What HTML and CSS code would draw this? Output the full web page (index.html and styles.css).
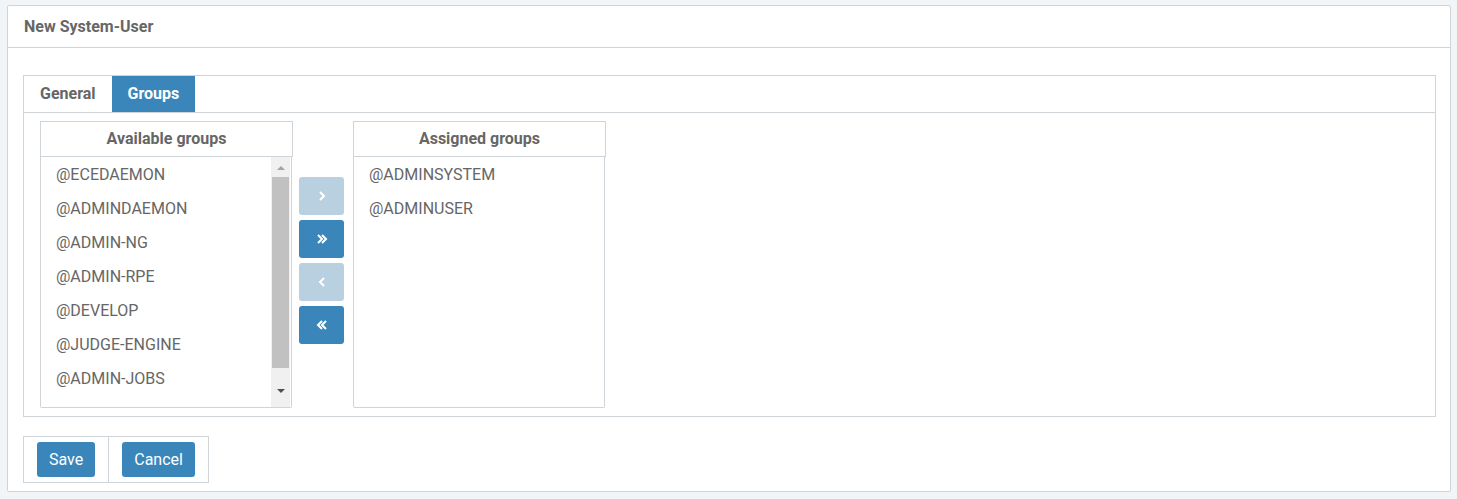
FILE: index.html
```html
<!DOCTYPE html>
<html>
<head>
<meta charset="utf-8">
<link rel="stylesheet" href="styles.css">
</head>
<body>
<div class="panel">
  <div class="panel-header">New System-User</div>
  <div class="panel-body">
    <div class="tabs">
      <div class="tab-bar">
        <div class="tab">General</div>
        <div class="tab active">Groups</div>
      </div>
      <div class="tab-content">
        <div class="listbox">
          <div class="listbox-head">Available groups</div>
          <div class="listbox-body">
            <ul class="items">
              <li>@ECEDAEMON</li>
              <li>@ADMINDAEMON</li>
              <li>@ADMIN-NG</li>
              <li>@ADMIN-RPE</li>
              <li>@DEVELOP</li>
              <li>@JUDGE-ENGINE</li>
              <li>@ADMIN-JOBS</li>
            </ul>
            <div class="scrollbar">
              <div class="arrow up"></div>
              <div class="thumb"></div>
              <div class="arrow down"></div>
            </div>
          </div>
        </div>
        <div class="movers">
          <div class="mv disabled"><svg width="10" height="12" viewBox="0 0 10 12"><path d="M3 2 L7 6 L3 10" fill="none" stroke="#fff" stroke-width="2"/></svg></div>
          <div class="mv"><svg width="12" height="12" viewBox="0 0 12 12"><path d="M2 2 L6 6 L2 10 M6 2 L10 6 L6 10" fill="none" stroke="#fff" stroke-width="2"/></svg></div>
          <div class="mv disabled"><svg width="10" height="12" viewBox="0 0 10 12"><path d="M7 2 L3 6 L7 10" fill="none" stroke="#fff" stroke-width="2"/></svg></div>
          <div class="mv"><svg width="12" height="12" viewBox="0 0 12 12"><path d="M6 2 L2 6 L6 10 M10 2 L6 6 L10 10" fill="none" stroke="#fff" stroke-width="2"/></svg></div>
        </div>
        <div class="listbox">
          <div class="listbox-head">Assigned groups</div>
          <div class="listbox-body">
            <ul class="items">
              <li>@ADMINSYSTEM</li>
              <li>@ADMINUSER</li>
            </ul>
          </div>
        </div>
      </div>
    </div>
    <div class="actions">
      <div class="action-cell"><button class="btn">Save</button></div>
      <div class="action-cell"><button class="btn">Cancel</button></div>
    </div>
  </div>
</div>
</body>
</html>
```

FILE: styles.css
```css
html, body {
  margin: 0;
  padding: 0;
  background: #f1f5f8;
  font-family: Roboto, "Liberation Sans", sans-serif;
  font-size: 16px;
  color: #666;
}

.panel {
  margin: 5px 6px 0 7px;
  width: 1442px;
  background: #fff;
  border: 1px solid #cfd4d8;
  border-radius: 2px;
}

.panel-header {
  height: 41px;
  line-height: 41px;
  padding-left: 16px;
  font-weight: bold;
  color: #666;
  border-bottom: 1px solid #cfd4d8;
}

.panel-body {
  padding: 27px 14px 8px 15px;
}

.tabs {
  border: 1px solid #cfd4d8;
}

.tab-bar {
  display: flex;
  border-bottom: 1px solid #cfd4d8;
}

.tab {
  height: 36px;
  line-height: 36px;
  padding: 0 16px;
  font-weight: bold;
  color: #666;
}

.tab.active {
  background: #3a86bb;
  color: #fff;
}

.tab-content {
  display: flex;
  align-items: flex-start;
  padding: 8px 16px 8px 16px;
}

.listbox {
  width: 253px;
}

.listbox-head {
  height: 34px;
  line-height: 34px;
  text-align: center;
  font-weight: bold;
  color: #666;
  border: 1px solid #cfd4d8;
}

.listbox-body {
  display: flex;
  height: 250px;
  border: 1px solid #cfd4d8;
  border-top: none;
  margin-right: 1px;
  border-radius: 0 0 2px 2px;
}

.items {
  flex: 1;
  list-style: none;
  margin: 0;
  padding: 0;
}

.items li {
  height: 34px;
  line-height: 36px;
  padding-left: 15px;
  color: #666;
}

.scrollbar {
  width: 19px;
  margin-right: 1px;
  background: #f0f0f0;
  display: flex;
  flex-direction: column;
  align-items: center;
}

.arrow {
  width: 0;
  height: 0;
  border-left: 4px solid transparent;
  border-right: 4px solid transparent;
}

.arrow.up {
  margin-top: 9px;
  border-bottom: 4px solid #a3a3a3;
}

.arrow.down {
  margin-top: 21px;
  border-top: 4px solid #505050;
}

.thumb {
  margin-top: 7px;
  width: 17px;
  height: 191px;
  background: #c1c1c1;
}

.movers {
  display: flex;
  flex-direction: column;
  gap: 5px;
  margin: 56px 9px 0 6px;
}

.mv {
  width: 45px;
  height: 38px;
  border-radius: 3px;
  background: #3a86bb;
  display: flex;
  align-items: center;
  justify-content: center;
}

.mv.disabled {
  background: #b9d0e1;
}

.actions {
  margin-top: 19px;
  display: inline-flex;
  border: 1px solid #cfd4d8;
}

.action-cell {
  padding: 5px 13px;
}

.action-cell + .action-cell {
  border-left: 1px solid #cfd4d8;
}

.btn {
  display: block;
  height: 35px;
  padding: 0 12px;
  border: none;
  border-radius: 3px;
  background: #3a86bb;
  color: #fff;
  font-family: Roboto, "Liberation Sans", sans-serif;
  font-size: 16px;
}
```
